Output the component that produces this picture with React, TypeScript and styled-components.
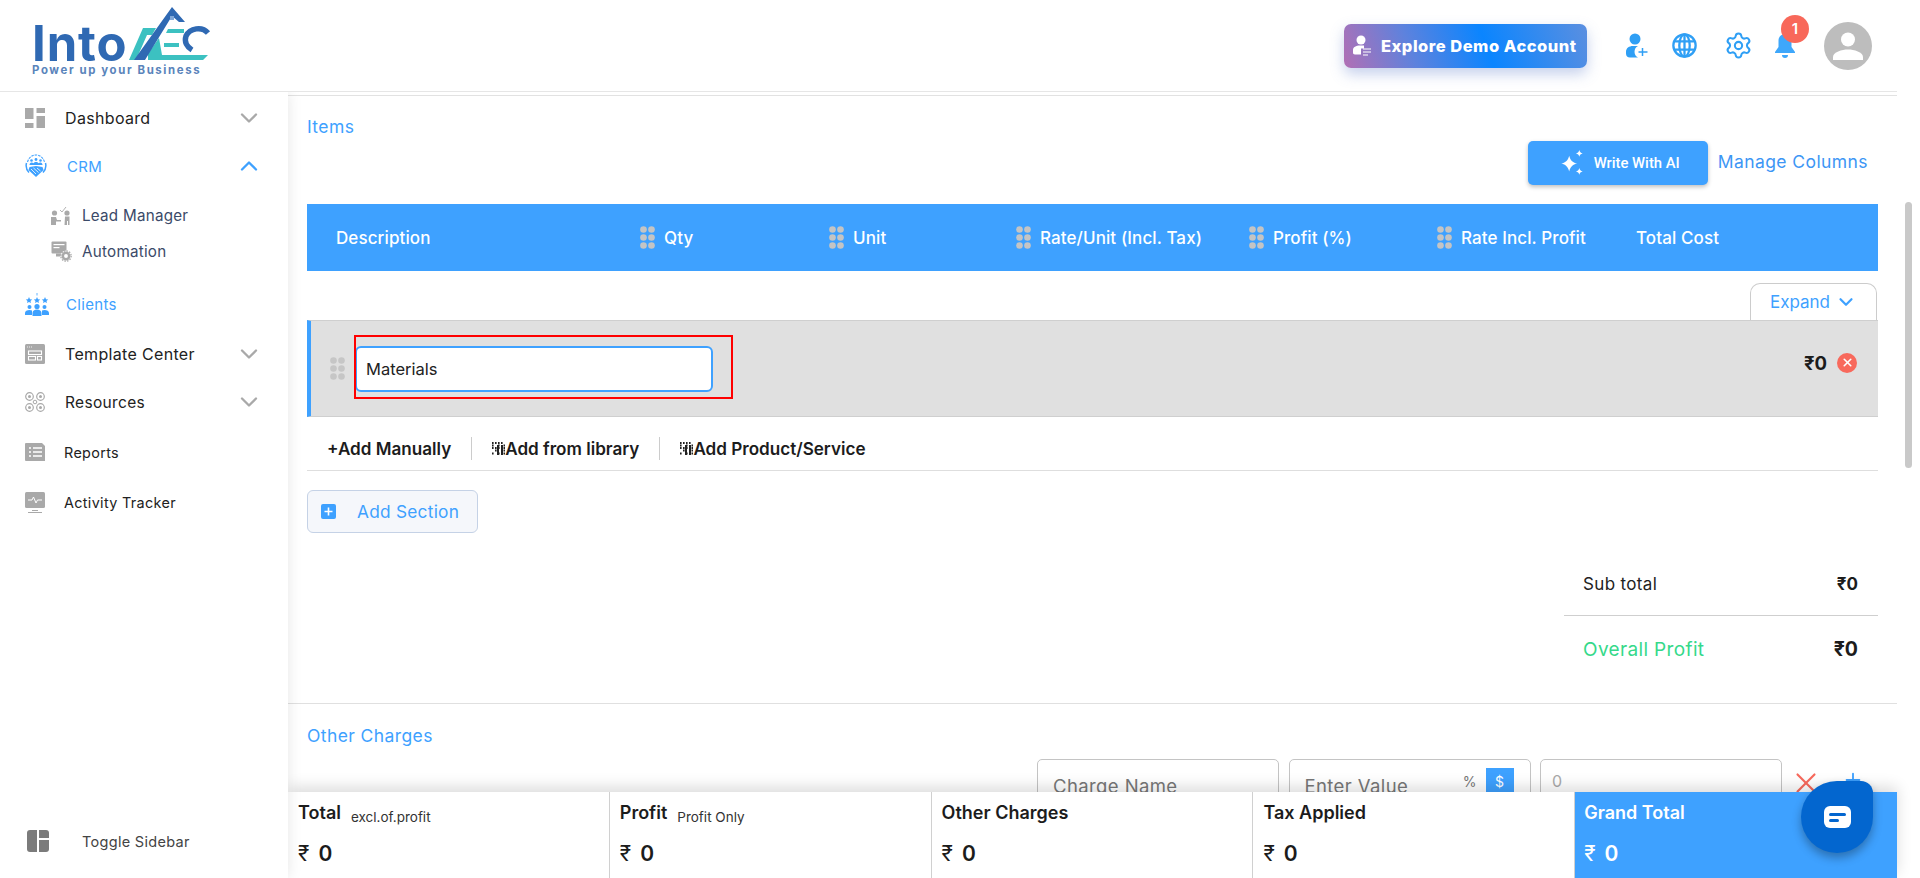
import React from "react";
import styled, { createGlobalStyle } from "styled-components";
import { Settings, ChevronDown, ChevronUp, X, Plus } from "lucide-react";

const BLUE = "#3ea1ff";
const FONT = `Inter, "Noto Sans", sans-serif`;

const Global = createGlobalStyle`
  html, body { margin: 0; padding: 0; background: #fff; overflow: hidden; }
  body { font-family: ${FONT}; color: #1c1c1c; }
  * { box-sizing: border-box; }
`;

const Page = styled.div`
  width: 1920px;
  height: 878px;
  position: relative;
  overflow: hidden;
  display: flex;
  flex-direction: column;
`;

/* ---------- header ---------- */
const Header = styled.header`
  height: 92px;
  margin-right: 23px;
  padding: 0 25px 0 32px;
  display: flex;
  align-items: center;
  border-bottom: 1px solid #e6e6e6;
  flex: none;
`;
const Logo = styled.div`
  position: relative;
  width: 180px;
  height: 66px;
  margin-top: -1px;
  display: flex;
  flex-direction: column;
`;
const LogoWord = styled.div`
  font-weight: 700;
  font-size: 49px;
  line-height: 36px;
  height: 36px;
  margin-top: 14px;
  color: #2f69b3;
  letter-spacing: 0.9px;
`;
const LogoTag = styled.div`
  font-weight: 700;
  font-size: 11.4px;
  line-height: 10px;
  margin-top: 3px;
  letter-spacing: 1.62px;
  color: #5a84bb;
  white-space: nowrap;
`;
const LogoMark = styled.svg`
  position: absolute;
  left: 88px;
  top: -7px;
`;
const DemoButton = styled.button`
  margin-left: auto;
  width: 243px;
  height: 44px;
  border: 0;
  border-radius: 7px;
  background: linear-gradient(70deg, #b26fb4 0%, #5e82dd 28%, #0a85ff 58%, #5b8fe0 100%);
  box-shadow: 0 6px 14px rgba(90, 120, 200, 0.35);
  color: #fff;
  font-family: ${FONT};
  font-weight: 800;
  font-size: 16.5px;
  letter-spacing: 0.5px;
  white-space: nowrap;
  display: flex;
  align-items: center;
  padding: 0 0 0 8px;
  gap: 9px;
`;
const TopIcon = styled.span<{ $ml: number }>`
  display: flex;
  margin-left: ${(p) => p.$ml}px;
  color: #2f9ff5;
  position: relative;
`;
const Dot = styled.span`
  position: absolute;
  left: 6px;
  top: -19px;
  width: 28px;
  height: 28px;
  border-radius: 50%;
  background: #f8685a;
  color: #fff;
  font-size: 15px;
  font-weight: 600;
  display: flex;
  align-items: center;
  justify-content: center;
`;
const Avatar = styled.div`
  width: 48px;
  height: 48px;
  border-radius: 50%;
  background: #bdbdbd;
  margin-left: 29px;
  display: flex;
  align-items: center;
  justify-content: center;
`;

/* ---------- body ---------- */
const Body = styled.div`
  flex: 1;
  display: grid;
  grid-template-columns: 288px 1fr;
  min-height: 0;
`;
const Sidebar = styled.aside`
  display: flex;
  flex-direction: column;
  justify-content: space-between;
  background: #fff;
  box-shadow: 0 0 14px rgba(0, 0, 0, 0.1);
  position: relative;
  z-index: 2;
  clip-path: inset(0 -20px 0 0);
`;
const NavList = styled.nav`
  padding-top: 1px;
`;
const NavRow = styled.div<{ $h?: number; $mt?: number }>`
  height: ${(p) => p.$h ?? 49}px;
  margin-top: ${(p) => p.$mt ?? 0}px;
  padding: 0 25px 0 25px;
  display: flex;
  align-items: center;
`;
const NavIcon = styled.span`
  width: 40px;
  flex: none;
  display: flex;
`;
const NavLabel = styled.span<{ $active?: boolean; $nudge?: number; $size?: number }>`
  font-size: ${(p) => p.$size ?? 15}px;
  letter-spacing: 0.33px;
  color: ${(p) => (p.$active ? BLUE : "#222")};
  margin-left: ${(p) => p.$nudge ?? 0}px;
  flex: 1;
`;
const SubList = styled.div`
  margin: 7px 0 11px;
`;
const SubRow = styled.div`
  height: 36px;
  padding-left: 51px;
  display: flex;
  align-items: center;
`;
const SubIcon = styled.span`
  width: 31px;
  flex: none;
  display: flex;
`;
const SubLabel = styled.span`
  font-size: 15.2px;
  letter-spacing: 0.25px;
  color: #3b4a68;
`;
const Toggle = styled.div`
  height: 44px;
  margin-bottom: 15px;
  padding-left: 27px;
  display: flex;
  align-items: center;
  gap: 33px;
  font-size: 14.5px;
  letter-spacing: 0.3px;
  color: #444;
`;

/* ---------- main ---------- */
const Main = styled.main`
  position: relative;
  overflow: hidden;
  background: #fff;
  padding-right: 23px;
`;
const TopRule = styled.div`
  margin-top: 3px;
  height: 1px;
  background: #e2e2e2;
`;
const Section = styled.section`
  padding: 0 19px;
`;
const Title = styled.h2`
  margin: 0;
  font-size: 17.5px;
  font-weight: 400;
  line-height: 24px;
  letter-spacing: 0.4px;
  color: ${BLUE};
`;
const ItemsTitle = styled(Title)`
  margin-top: 19px;
`;
const ActionBar = styled.div`
  margin-top: 2px;
  display: flex;
  justify-content: flex-end;
  align-items: center;
  gap: 10px;
  padding-right: 10px;
`;
const AiButton = styled.button`
  width: 180px;
  height: 44px;
  border: 0;
  border-radius: 5px;
  background: ${BLUE};
  box-shadow: 0 2px 4px rgba(0, 0, 0, 0.25);
  color: #fff;
  font-family: Roboto, ${FONT};
  font-size: 14.8px;
  font-weight: 500;
  display: flex;
  align-items: center;
  padding-left: 31px;
  gap: 9px;
`;
const LinkText = styled.span`
  font-size: 17.5px;
  line-height: 22px;
  margin-bottom: 2px;
  letter-spacing: 0.42px;
  color: #3d96f5;
`;
const TableHead = styled.div`
  margin-top: 19px;
  height: 67px;
  background: ${BLUE};
  display: grid;
  grid-template-columns: 333px 189px 187px 233px 188px 199px 1fr;
  align-items: center;
  color: #fff;
  font-size: 17px;
  font-weight: 500;
  letter-spacing: 0.1px;
`;
const HeadCell = styled.div<{ $pl?: number }>`
  display: flex;
  align-items: center;
  gap: 9px;
  padding-left: ${(p) => p.$pl ?? 0}px;
  white-space: nowrap;
`;
const TabRow = styled.div`
  margin-top: 12px;
  display: flex;
  justify-content: flex-end;
  padding-right: 1px;
`;
const ExpandTab = styled.div`
  width: 127px;
  height: 37px;
  border: 1px solid #ccc;
  border-bottom: 0;
  border-radius: 10px 10px 0 0;
  color: ${BLUE};
  font-size: 17px;
  display: flex;
  align-items: center;
  justify-content: center;
  gap: 5px;
`;
const GroupRow = styled.div`
  height: 97px;
  background: #e0e0e0;
  border-top: 1px solid #cfcfcf;
  border-bottom: 1px solid #cfcfcf;
  border-left: 4px solid ${BLUE};
  padding: 0 21px 0 19px;
  display: flex;
  align-items: center;
`;
const InputWrap = styled.div`
  position: relative;
  margin-left: 10px;
`;
const NameInput = styled.div`
  width: 358px;
  height: 46px;
  background: #fff;
  border: 2px solid ${BLUE};
  border-radius: 6px;
  font-size: 16.5px;
  padding-left: 9px;
  display: flex;
  align-items: center;
  color: #222;
`;
const Highlight = styled.div`
  position: absolute;
  left: -1px;
  top: -11px;
  width: 379px;
  height: 64px;
  border: 2px solid #f00;
`;
const RowAmount = styled.div`
  margin-left: auto;
  margin-bottom: 12px;
  font-size: 18.5px;
  font-weight: 700;
`;
const CloseDot = styled.span`
  margin: 0 0 12px 10px;
  width: 20px;
  height: 20px;
  border-radius: 50%;
  background: #f8695c;
  display: flex;
  align-items: center;
  justify-content: center;
  color: #fff;
`;
const AddBar = styled.div`
  height: 54px;
  padding: 9px 0 0 20px;
  border-bottom: 1px solid #dedede;
  display: flex;
  align-items: center;
  font-size: 17.1px;
  font-weight: 600;
  color: #1c1c1c;
`;
const AddItem = styled.span`
  display: flex;
  align-items: center;
  white-space: nowrap;
`;
const AddSep = styled.span`
  width: 1px;
  height: 23px;
  background: #ccc;
  margin: 0 20px;
`;
const AddSectionBtn = styled.button`
  margin-top: 19px;
  width: 171px;
  height: 43px;
  border: 1px solid #c5d2e6;
  border-radius: 6px;
  background: #f5f7fb;
  color: ${BLUE};
  font-family: ${FONT};
  font-size: 17.3px;
  letter-spacing: 0.25px;
  display: flex;
  align-items: center;
  padding: 0 0 0 13px;
  gap: 21px;
`;
const Summary = styled.div`
  margin: 19px 0 21px auto;
  width: 314px;
`;
const SummaryRow = styled.div<{ $h: number; $line?: boolean }>`
  height: ${(p) => p.$h}px;
  padding: 0 20px 0 19px;
  display: flex;
  align-items: center;
  justify-content: space-between;
  border-bottom: ${(p) => (p.$line ? "1px solid #cfcfcf" : "0")};
`;
const SummaryLabel = styled.span<{ $green?: boolean }>`
  font-size: ${(p) => (p.$green ? 19 : 17)}px;
  letter-spacing: 0.35px;
  color: ${(p) => (p.$green ? "#35d98a" : "#222")};
`;
const SummaryValue = styled.span<{ $big?: boolean }>`
  font-size: ${(p) => (p.$big ? 19.5 : 17)}px;
  font-weight: 700;
`;
const OtherSection = styled(Section)`
  border-top: 1px solid #e0e0e0;
  padding-top: 20px;
`;
const FieldRow = styled.div`
  margin-top: 11px;
  display: flex;
  justify-content: flex-end;
  padding-right: 14px;
`;
const Field = styled.div`
  position: relative;
  width: 242px;
  height: 62px;
  margin-right: 9.5px;
  border: 1px solid #c4c4c4;
  border-radius: 5px;
  font-size: 18.5px;
  line-height: 22px;
  letter-spacing: 0.4px;
  white-space: nowrap;
  color: #777;
  padding: 15px 0 0 15px;
`;
const ZeroField = styled(Field)`
  margin-right: 0;
  padding: 10px 0 0 11px;
  font-size: 16px;
  color: #aaa;
`;
const Unit = styled.span<{ $on?: boolean }>`
  position: absolute;
  top: 8px;
  right: ${(p) => (p.$on ? 16 : 52)}px;
  height: 28px;
  width: ${(p) => (p.$on ? 28 : 16)}px;
  display: flex;
  align-items: center;
  justify-content: center;
  font-size: 14px;
  letter-spacing: 0;
  background: ${(p) => (p.$on ? BLUE : "transparent")};
  color: ${(p) => (p.$on ? "#fff" : "#777")};
`;
const RemoveIcon = styled.span`
  display: flex;
  align-self: flex-start;
  margin: 7px 0 0 7px;
  color: #f8695c;
`;
const AddIcon = styled.span`
  display: flex;
  align-self: flex-start;
  margin: 10px 0 0 19px;
  color: ${BLUE};
`;
const ScrollThumb = styled.div`
  position: absolute;
  right: 8px;
  top: 110px;
  width: 7px;
  height: 266px;
  border-radius: 4px;
  background: #c9c9c9;
`;

/* ---------- footer ---------- */
const Footer = styled.footer`
  position: absolute;
  left: 0;
  right: 23px;
  bottom: 0;
  height: 86px;
  background: #fff;
  box-shadow: 0 -5px 14px rgba(0, 0, 0, 0.14);
  display: grid;
  grid-template-columns: repeat(5, 1fr);
`;
const Cell = styled.div<{ $grand?: boolean }>`
  padding: 9px 0 0 ${(p) => (p.$grand ? 9 : 10)}px;
  border-right: ${(p) => (p.$grand ? "0" : "1px solid #d0d0d0")};
  background: ${(p) => (p.$grand ? BLUE : "#fff")};
  color: ${(p) => (p.$grand ? "#fff" : "#1c1c1c")};
`;
const CellHead = styled.div`
  display: flex;
  align-items: baseline;
  height: 24px;
  line-height: 24px;
  font-size: 18px;
  font-weight: 600;
  gap: 10px;
`;
const CellNote = styled.span`
  font-size: 13.5px;
  font-weight: 400;
  color: #333;
  position: relative;
  top: 3px;
`;
const CellAmount = styled.div`
  margin-top: 14px;
  height: 28px;
  display: flex;
  align-items: center;
  gap: 9px;
  font-size: 21px;
  font-weight: 600;
`;
const Rupee = styled.span`
  font-size: 21px;
  font-weight: 400;
`;
const ChatBubble = styled.div`
  position: absolute;
  left: 1801px;
  top: 781px;
  width: 72px;
  height: 72px;
  border-radius: 36px 12px 36px 36px;
  background: #0366cf;
  box-shadow: 0 5px 10px rgba(0, 0, 0, 0.3);
  display: flex;
  align-items: center;
  justify-content: center;
  z-index: 5;
`;

/* ---------- drawings ---------- */
const Grip = ({ c = "#c4c4c4" }: { c?: string }) => (
  <svg width="15" height="23" viewBox="0 0 15 23" fill={c}>
    {[3.5, 11.5, 19.5].flatMap((y) =>
      [3.5, 11.5].map((x) => <circle key={`${x}-${y}`} cx={x} cy={y} r="3.3" />)
    )}
  </svg>
);
const G = "#a9a9a9";
const DashIcon = () => (
  <svg width="20" height="20" viewBox="0 0 20 20" fill={G}>
    <rect x="0" y="0" width="8.5" height="11" />
    <rect x="0" y="15" width="8.5" height="5" />
    <rect x="11.5" y="0" width="8.5" height="5" />
    <rect x="11.5" y="8" width="8.5" height="12" />
  </svg>
);
const CrmIcon = () => (
  <svg width="22" height="24" viewBox="0 0 22 24" fill={BLUE}>
    <path d="M2.500 8C4 3 7.500 1 11 1s7 2 8.500 7" fill="none" stroke={BLUE} strokeWidth="1.100" strokeDasharray="2.500 1" />
    <circle cx="6.500" cy="6.500" r="1.300" />
    <circle cx="11" cy="5.500" r="1.400" />
    <circle cx="15.500" cy="6.500" r="1.300" />
    <path d="M4.500 11c0-1.500 1-2.500 2-2.500.8 0 1.500.3 2 .8.500-.8 1.500-1.300 2.500-1.300s2 .5 2.500 1.300c.5-.5 1.200-.8 2-.8 1 0 2 1 2 2.500z" />
    <path d="M1.500 9C.5 13 1.500 16 4 18.500M20.500 9c1 4 0 7-2.500 9.500" fill="none" stroke={BLUE} strokeWidth="1.500" />
    <path d="M4.500 13l6.500-1 6.500 1 1 3L11 23 3.500 16z" />
    <path d="M6 15l5 5M8.500 14l5 4.500M12 14l3.500 3" stroke="#fff" strokeWidth="0.800" />
  </svg>
);
const LeadIcon = () => (
  <svg width="20" height="20" viewBox="0 0 20 20" fill={G}>
    <circle cx="3.5" cy="8" r="2.6" /><circle cx="16" cy="8" r="2.6" />
    <path d="M0 12h5l1 3h4v1.5H5V20H0zM14 11.500h4.500V20h-1.500v-4h-1v4H13.500z" />
    <path d="M9 5l2 2 4-5" fill="none" stroke={G} strokeWidth="0.9" />
  </svg>
);
const AutoIcon = () => (
  <svg width="21" height="21" viewBox="0 0 21 21" fill="none">
    <rect x="0.500" y="0.500" width="15" height="12" rx="1" fill={G} />
    <rect x="2.500" y="3" width="11" height="1.200" fill="#fff" />
    <rect x="2.500" y="6" width="6" height="1.200" fill="#fff" />
    <rect x="5" y="12.500" width="6" height="3" fill={G} />
    <circle cx="15" cy="15" r="5.500" fill="#fff" />
    <circle cx="15" cy="15" r="3.200" stroke={G} strokeWidth="2.500" />
    <circle cx="15" cy="15" r="5.200" stroke={G} strokeWidth="1.300" strokeDasharray="1.500 1.200" />
  </svg>
);
const ClientsIcon = () => (
  <svg width="24" height="23" viewBox="0 0 24 23" fill={BLUE}>
    <path d="M4 4l1 2.200 2.200.2-1.700 1.500.5 2.200L4 9l-2 1.100.5-2.200L.8 6.400 3 6.200zM12 4l1 2.200 2.200.2-1.700 1.500.5 2.200L12 9l-2 1.100.5-2.200-1.700-1.500 2.200-.2zM20 4l1 2.200 2.200.2-1.700 1.500.5 2.200L20 9l-2 1.100.5-2.200-1.700-1.500 2.200-.2z" />
    <path d="M12 0v2.500" stroke={BLUE} strokeWidth="0.800" />
    <circle cx="4.500" cy="14" r="2" /><circle cx="19.500" cy="14" r="2" /><circle cx="12" cy="13.500" r="2.600" />
    <path d="M0 22v-2c0-2 2-3 4.500-3 1 0 2 .2 2.500.5V22zM24 22v-2c0-2-2-3-4.500-3-1 0-2 .2-2.500.5V22zM7.500 23v-3c0-2 2-3.500 4.500-3.500s4.500 1.500 4.500 3.500v3z" />
  </svg>
);
const TemplateIcon = () => (
  <svg width="20" height="20" viewBox="0 0 20 20">
    <rect width="20" height="20" rx="1.500" fill={G} />
    <path d="M2 3h1M4 3h1M6 3h1" stroke="#fff" strokeWidth="0.800" />
    <rect x="3.500" y="7" width="13" height="3.500" fill="none" stroke="#fff" strokeWidth="1.100" />
    <rect x="3.500" y="12.500" width="7" height="3.500" fill="none" stroke="#fff" strokeWidth="1.100" />
    <rect x="12.500" y="12.500" width="4" height="3.500" fill="none" stroke="#fff" strokeWidth="1.100" />
  </svg>
);
const ResourcesIcon = () => (
  <svg width="20" height="20" viewBox="0 0 20 20" fill="none" stroke={G}>
    {[[4.500, 4.500], [15.500, 4.500], [4.500, 15.500], [15.500, 15.500]].map(([x, y]) => (
      <React.Fragment key={`${x}${y}`}>
        <circle cx={x} cy={y} r="3.800" strokeWidth="1.200" />
        <circle cx={x} cy={y} r="1.500" fill={G} stroke="none" />
      </React.Fragment>
    ))}
    <circle cx="10" cy="10" r="1.800" strokeWidth="1" />
  </svg>
);
const ReportsIcon = () => (
  <svg width="21" height="18" viewBox="0 0 21 18">
    <path d="M1 0h16l3 3v15H1a1 1 0 0 1-1-1V1a1 1 0 0 1 1-1z" fill={G} />
    <path d="M4 5h2M8 5h9M4 9h2M8 9h9M4 13h2M8 13h9" stroke="#fff" strokeWidth="1.500" />
  </svg>
);
const ActivityIcon = () => (
  <svg width="20" height="21" viewBox="0 0 20 21">
    <rect width="20" height="16" rx="1.500" fill={G} />
    <path d="M3 8h4l1.500-3 2.500 6 1.500-3H17" fill="none" stroke="#fff" strokeWidth="1" />
    <path d="M7 18.500h6M3 20.500h14" stroke={G} strokeWidth="1" />
  </svg>
);
const SidebarToggleIcon = () => (
  <svg width="22" height="22" viewBox="0 0 22 22" fill="#7b7b7b">
    <path d="M3 0h7v22H3a3 3 0 0 1-3-3V3a3 3 0 0 1 3-3z" />
    <path d="M12 0h7a3 3 0 0 1 3 3v5H12z" />
    <path d="M12 10h10v9a3 3 0 0 1-3 3h-7z" />
  </svg>
);
const AddUserIcon = () => (
  <svg width="22" height="25" viewBox="0 0 22 25" fill="#2f9ff5">
    <circle cx="9" cy="6" r="5.500" />
    <path d="M0 19c0-4 3-6 7-6h5a6.500 6.500 0 0 0 0 11.500H4c-2.500 0-4-1.500-4-4z" />
    <path d="M16.500 15v8M12.500 19h9" stroke="#2f9ff5" strokeWidth="1.500" fill="none" />
  </svg>
);
const GlobeIcon = () => (
  <svg width="25" height="25" viewBox="0 0 24 24" fill="none" stroke="#2f9ff5" strokeWidth="2.200">
    <circle cx="12" cy="12" r="10.700" />
    <ellipse cx="12" cy="12" rx="5" ry="10.700" />
    <path d="M12 1.300v21.400M2.500 8h19M2.500 16h19" />
  </svg>
);
const BellIcon = () => (
  <svg width="20" height="24" viewBox="0 0 20 24" fill="#3ea7fb">
    <path d="M10 0c4 0 6.500 3 6.500 7v6l3.500 5v1H0v-1l3.500-5V7C3.500 3 6 0 10 0z" />
    <path d="M7 21h6a3 3 0 0 1-6 0z" />
  </svg>
);
const PersonIcon = () => (
  <svg width="32" height="32" viewBox="0 0 32 32" fill="#fff">
    <circle cx="16" cy="9.500" r="7" />
    <path d="M1 30v-3c0-5 9-7.500 15-7.500S31 22 31 27v3z" />
  </svg>
);
const DemoUserIcon = () => (
  <svg width="20" height="22" viewBox="0 0 20 22" fill="#fff">
    <circle cx="9" cy="5" r="4.500" />
    <path d="M1 15c0-3 3-4.500 7-4.500h4v3H9v6H3c-1.500 0-2-1-2-2z" />
    <path d="M11 14h8M11 17h8M11 20h5" stroke="#fff" strokeWidth="1.200" />
  </svg>
);
const Sparkle = () => (
  <svg width="26" height="27" viewBox="0 0 23 24" fill="#fff">
    <path d="M9 5c1 4 3 6 7 7-4 1-6 3-7 7-1-4-3-6-7-7 4-1 6-3 7-7z" />
    <path d="M18 0c.4 1.800 1.200 2.600 3 3-1.800.4-2.600 1.200-3 3-.4-1.800-1.200-2.600-3-3 1.800-.4 2.600-1.200 3-3zM18 16c.4 1.800 1.200 2.600 3 3-1.800.4-2.600 1.200-3 3-.4-1.800-1.200-2.600-3-3 1.800-.4 2.600-1.200 3-3z" />
  </svg>
);
const LibIcon = () => (
  <svg width="13" height="13" viewBox="0 0 13 13" fill="#222">
    {[0, 2.500, 5, 7.500, 10.500].flatMap((y) =>
      [0, 3, 6, 9, 11.500].map((x) =>
        (x + y) % 2 < 1.300 ? <rect key={`${x}-${y}`} x={x} y={y} width="1.600" height="2" /> : null
      )
    )}
    <rect x="5" y="3" width="2" height="10" />
    <rect x="9" y="3" width="2" height="10" />
  </svg>
);
const PlusSquare = () => (
  <svg width="15" height="15" viewBox="0 0 15 15">
    <rect width="15" height="15" rx="2" fill={BLUE} />
    <path d="M7.500 3.500v8M3.500 7.500h8" stroke="#fff" strokeWidth="1.600" />
  </svg>
);
const ChatIcon = () => (
  <svg width="27" height="22" viewBox="0 0 27 22">
    <path d="M6 0h15a6 6 0 0 1 6 6v10a6 6 0 0 1-6 6H6a6 6 0 0 1-6-6V6a6 6 0 0 1 6-6z" fill="#fff" />
    <rect x="5" y="7" width="17" height="3" rx="1.500" fill="#0366cf" />
    <rect x="5" y="13" width="10" height="3" rx="1.500" fill="#0366cf" />
  </svg>
);

const Head = ({ children }: { children: string }) => (
  <HeadCell>
    <Grip />
    {children}
  </HeadCell>
);

const totals = [
  { title: "Total", note: "excl.of.profit" },
  { title: "Profit", note: "Profit Only" },
  { title: "Other Charges" },
  { title: "Tax Applied" },
  { title: "Grand Total", grand: true },
];

export default function App() {
  return (
    <Page>
      <Global />
      <Header>
        <Logo>
          <LogoWord>Into</LogoWord>
          <LogoTag>Power up your Business</LogoTag>
          <LogoMark width="95" height="60" viewBox="0 0 95 60">
            <path d="M9 55l14-32h13l-4 7h-5L16 55z" fill="#3cc1c1" />
            <path d="M27 50l12-17 3 17zM28 50h60l-5 5H28z" fill="#3cc1c1" />
            <path d="M48 24h16v4H46zM44 38h15v4H44z" fill="#3cc1c1" />
            <path d="M52 2l13 15h-6l-7-6-27 44H14z" fill="#2f69b3" />
            <path d="M88 28C82 21 70 23 66 31c-2 6 1 11 6 14" fill="none" stroke="#2f69b3" strokeWidth="5.500" />
            <rect x="50" y="11" width="4" height="4" fill="#7fa7d8" />
          </LogoMark>
        </Logo>
        <DemoButton>
          <DemoUserIcon />
          Explore Demo Account
        </DemoButton>
        <TopIcon $ml={39}>
          <AddUserIcon />
        </TopIcon>
        <TopIcon $ml={24}>
          <GlobeIcon />
        </TopIcon>
        <TopIcon $ml={27}>
          <Settings size={29} strokeWidth={1.7} />
        </TopIcon>
        <TopIcon $ml={22}>
          <BellIcon />
          <Dot>1</Dot>
        </TopIcon>
        <Avatar>
          <PersonIcon />
        </Avatar>
      </Header>
      <Body>
        <Sidebar>
          <NavList>
            <NavRow>
              <NavIcon><DashIcon /></NavIcon>
              <NavLabel $size={16}>Dashboard</NavLabel>
              <ChevronDown size={28} color="#a9a9a9" />
            </NavRow>
            <NavRow $h={48}>
              <NavIcon><CrmIcon /></NavIcon>
              <NavLabel $active $nudge={2}>CRM</NavLabel>
              <ChevronUp size={28} color={BLUE} />
            </NavRow>
            <SubList>
              <SubRow>
                <SubIcon><LeadIcon /></SubIcon>
                <SubLabel>Lead Manager</SubLabel>
              </SubRow>
              <SubRow>
                <SubIcon><AutoIcon /></SubIcon>
                <SubLabel>Automation</SubLabel>
              </SubRow>
            </SubList>
            <NavRow>
              <NavIcon><ClientsIcon /></NavIcon>
              <NavLabel $active $nudge={1}>Clients</NavLabel>
            </NavRow>
            <NavRow $h={48} $mt={1}>
              <NavIcon><TemplateIcon /></NavIcon>
              <NavLabel $size={16}>Template Center</NavLabel>
              <ChevronDown size={28} color="#a9a9a9" />
            </NavRow>
            <NavRow $h={48}>
              <NavIcon><ResourcesIcon /></NavIcon>
              <NavLabel $size={15.5}>Resources</NavLabel>
              <ChevronDown size={28} color="#a9a9a9" />
            </NavRow>
            <NavRow $h={48} $mt={2}>
              <NavIcon><ReportsIcon /></NavIcon>
              <NavLabel $nudge={-1} $size={14.4}>Reports</NavLabel>
            </NavRow>
            <NavRow $h={48} $mt={2}>
              <NavIcon><ActivityIcon /></NavIcon>
              <NavLabel $nudge={-1} $size={14.4}>Activity Tracker</NavLabel>
            </NavRow>
          </NavList>
          <Toggle>
            <SidebarToggleIcon />
            Toggle Sidebar
          </Toggle>
        </Sidebar>
        <Main>
          <TopRule />
          <Section>
            <ItemsTitle>Items</ItemsTitle>
            <ActionBar>
              <AiButton>
                <Sparkle />
                Write With AI
              </AiButton>
              <LinkText>Manage Columns</LinkText>
            </ActionBar>
            <TableHead>
              <HeadCell $pl={29}>Description</HeadCell>
              <Head>Qty</Head>
              <Head>Unit</Head>
              <Head>Rate/Unit (Incl. Tax)</Head>
              <Head>Profit (%)</Head>
              <Head>Rate Incl. Profit</Head>
              <HeadCell>Total Cost</HeadCell>
            </TableHead>
            <TabRow>
              <ExpandTab>
                Expand
                <ChevronDown size={22} strokeWidth={2.4} />
              </ExpandTab>
            </TabRow>
            <GroupRow>
              <Grip c="#c6c6c6" />
              <InputWrap>
                <NameInput>Materials</NameInput>
                <Highlight />
              </InputWrap>
              <RowAmount>₹0</RowAmount>
              <CloseDot>
                <X size={13} strokeWidth={3} />
              </CloseDot>
            </GroupRow>
            <AddBar>
              <AddItem>+Add Manually</AddItem>
              <AddSep />
              <AddItem><LibIcon />Add from library</AddItem>
              <AddSep />
              <AddItem><LibIcon />Add Product/Service</AddItem>
            </AddBar>
            <AddSectionBtn>
              <PlusSquare />
              Add Section
            </AddSectionBtn>
            <Summary>
              <SummaryRow $h={64} $line>
                <SummaryLabel>Sub total</SummaryLabel>
                <SummaryValue>₹0</SummaryValue>
              </SummaryRow>
              <SummaryRow $h={66}>
                <SummaryLabel $green>Overall Profit</SummaryLabel>
                <SummaryValue $big>₹0</SummaryValue>
              </SummaryRow>
            </Summary>
          </Section>
          <OtherSection>
            <Title>Other Charges</Title>
            <FieldRow>
              <Field>Charge Name</Field>
              <Field>
                Enter Value
                <Unit>%</Unit>
                <Unit $on>$</Unit>
              </Field>
              <ZeroField>0</ZeroField>
              <RemoveIcon><X size={34} strokeWidth={1.5} /></RemoveIcon>
              <AddIcon><Plus size={22} strokeWidth={2} /></AddIcon>
            </FieldRow>
          </OtherSection>
          <ScrollThumb />
          <Footer>
            {totals.map((t) => (
              <Cell key={t.title} $grand={t.grand}>
                <CellHead>
                  {t.title}
                  {t.note && <CellNote>{t.note}</CellNote>}
                </CellHead>
                <CellAmount>
                  <Rupee>₹</Rupee>0
                </CellAmount>
              </Cell>
            ))}
          </Footer>
        </Main>
      </Body>
      <ChatBubble>
        <ChatIcon />
      </ChatBubble>
    </Page>
  );
}
